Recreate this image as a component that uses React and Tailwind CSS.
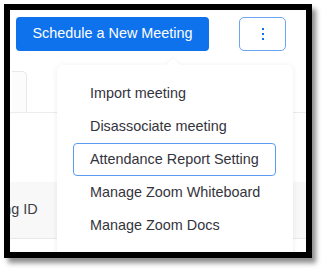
import React from "react";

const menuItems = [
  "Import meeting",
  "Disassociate meeting",
  "Attendance Report Setting",
  "Manage Zoom Whiteboard",
  "Manage Zoom Docs",
];

const App = () => {
  return (
    <div className="w-[325px] h-[270px] bg-white overflow-hidden font-['Liberation_Sans',Arial,sans-serif]">
      <div className="ml-[4px] mt-[4px] w-[308px] h-[254px] border-[6px] border-black shadow-[4px_5px_5px_rgba(0,0,0,0.45)]">
        <div className="relative w-full h-full bg-white overflow-hidden">
          <div className="flex items-start pt-[7px] pl-[6px]">
            <button className="w-[193px] h-[34px] rounded-[4px] bg-[#0e72ed] text-white text-[14.4px]">
              Schedule a New Meeting
            </button>
            <button className="ml-[30px] w-[47px] h-[34px] rounded-[5px] border border-[#6aa6f3] flex flex-col items-center justify-center gap-[3px]">
              <span className="w-[2px] h-[2px] bg-[#0e72ed]" />
              <span className="w-[2px] h-[2px] bg-[#0e72ed]" />
              <span className="w-[2px] h-[2px] bg-[#0e72ed]" />
            </button>
          </div>

          <div className="mt-[20px] flex">
            <div className="ml-[2px] w-[15px] h-[41px] border border-l-0 border-b-0 border-[#e8e8e8] rounded-tr-[5px] bg-[#fcfcfc]" />
          </div>
          <div className="h-px bg-[#ececec]" />

          <div className="mt-[69px] h-[57px] bg-[#f8f8f8] border-b border-[#e8e8e8] flex items-center overflow-hidden">
            <span className="ml-[-42px] text-[14.4px] text-[#3d3d44] whitespace-nowrap">
              Meeting ID
            </span>
          </div>

          <div className="absolute left-[47px] top-[55px] w-[236px] h-[220px] bg-white rounded-[6px] shadow-[0_1px_6px_rgba(0,0,0,0.08)] pt-[12px] pl-[16px]">
            <div className="absolute left-[111px] top-[-5px] w-[10px] h-[10px] bg-white rotate-45 shadow-[-1px_-1px_2px_rgba(0,0,0,0.04)]" />
            <div className="flex flex-col">
              {menuItems.map((item, i) => (
                <div
                  key={item}
                  className={
                    i === 2
                      ? "w-[203px] h-[33px] flex items-center pl-[16px] rounded-[4px] border border-[#5c9cf0] text-[14.4px] text-[#34343c]"
                      : "w-[203px] h-[33px] flex items-center pl-[17px] text-[14.4px] text-[#34343c]"
                  }
                >
                  {item}
                </div>
              ))}
            </div>
          </div>
        </div>
      </div>
    </div>
  );
};

export default App;
